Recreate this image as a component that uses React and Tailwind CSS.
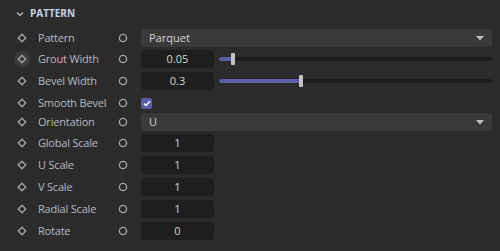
const rows = [
  { label: 'Pattern', kind: 'select', value: 'Parquet', h: 'h-[21px]' },
  { label: 'Grout Width', kind: 'slider', value: '0.05', pct: 0.05, h: 'h-[22px]', hover: true },
  { label: 'Bevel Width', kind: 'slider', value: '0.3', pct: 0.3, h: 'h-[22px]' },
  { label: 'Smooth Bevel', kind: 'check', h: 'h-[19px]' },
  { label: 'Orientation', kind: 'select', value: 'U', h: 'h-[21px]' },
  { label: 'Global Scale', kind: 'number', value: '1', h: 'h-[22px]' },
  { label: 'U Scale', kind: 'number', value: '1', h: 'h-[22px]' },
  { label: 'V Scale', kind: 'number', value: '1', h: 'h-[22px]' },
  { label: 'Radial Scale', kind: 'number', value: '1', h: 'h-[22px]' },
  { label: 'Rotate', kind: 'number', value: '0', h: 'h-[22px]' },
];

const Diamond = () => (
  <svg width="10" height="10" viewBox="0 0 10 10">
    <path d="M5 1.2 L8.8 5 L5 8.8 L1.2 5 Z" fill="none" stroke="#a8a8a8" strokeWidth="1.3" />
  </svg>
);

const Ring = () => (
  <svg width="10" height="10" viewBox="0 0 10 10">
    <circle cx="5" cy="5" r="3.6" fill="none" stroke="#a8a8a8" strokeWidth="1.3" />
  </svg>
);

const Caret = () => (
  <svg width="8" height="5" viewBox="0 0 8 5">
    <path d="M0 0 H8 L4 4.5 Z" fill="#bdbdbd" />
  </svg>
);

const NumberBox = ({ value }) => (
  <div className="w-[73px] h-[18px] shrink-0 rounded-[4px] bg-[#1e1e1e] flex items-center justify-center text-[11px] text-[#d4d4d4]">
    {value}
  </div>
);

const Control = ({ row }) => {
  if (row.kind === 'select') {
    return (
      <div className="flex-1 h-[18px] rounded-[4px] bg-[#3a3a3a] flex items-center justify-between pl-[8px] pr-[8px] text-[11px] text-[#d4d4d4]">
        <span>{row.value}</span>
        <Caret />
      </div>
    );
  }
  if (row.kind === 'slider') {
    return (
      <div className="flex-1 flex items-center gap-[5px]">
        <NumberBox value={row.value} />
        <div className="relative flex-1 h-[4px] rounded-full bg-[#1c1c1c]">
          <div className="absolute left-0 top-0 h-[4px] rounded-full bg-[#5b5ea6]" style={{ width: `${row.pct * 100}%` }} />
          <div
            className="absolute top-[-4px] w-[4px] h-[12px] rounded-[1px] bg-[#c4c4c4]"
            style={{ left: `calc(${row.pct * 100}% - 2px)` }}
          />
        </div>
      </div>
    );
  }
  if (row.kind === 'check') {
    return (
      <div className="w-[11px] h-[11px] rounded-[2px] bg-[#5b5ea6] flex items-center justify-center">
        <svg width="8" height="7" viewBox="0 0 8 7">
          <path d="M1 3.6 L3 5.5 L7 1.3" fill="none" stroke="#ffffff" strokeWidth="1.5" />
        </svg>
      </div>
    );
  }
  return <NumberBox value={row.value} />;
};

export default function App() {
  return (
    <div
      className="w-[500px] h-[251px] bg-[#2b2b2b] overflow-hidden"
      style={{ fontFamily: '"Open Sans", "Noto Sans", sans-serif' }}
    >
      <div className="h-[27px] flex items-center pl-[16px] gap-[6px]">
        <svg width="8" height="6" viewBox="0 0 8 6">
          <path d="M1 1.5 L4 4.5 L7 1.5" fill="none" stroke="#b8c0cc" strokeWidth="1.2" />
        </svg>
        <span className="text-[10px] font-bold text-[#c8d2e4]">PATTERN</span>
      </div>
      {rows.map((row) => (
        <div key={row.label} className={`${row.h} flex items-start pt-[2px] pr-[8px]`}>
          <div className="h-[18px] flex items-center w-full">
            <div className="w-[38px] shrink-0 pl-[14px] flex items-center">
              <div className={`w-[16px] h-[16px] shrink-0 rounded-full flex items-center justify-center ${row.hover ? 'bg-[#3a3a3a]' : ''}`}>
                <Diamond />
              </div>
            </div>
            <div className="w-[80px] shrink-0 text-[11px] tracking-[-0.2px] text-[#b3bac6] whitespace-nowrap">{row.label}</div>
            <div className="w-[23px] shrink-0 flex items-center">
              <Ring />
            </div>
            <div className="flex-1 flex items-center">
              <Control row={row} />
            </div>
          </div>
        </div>
      ))}
    </div>
  );
}
